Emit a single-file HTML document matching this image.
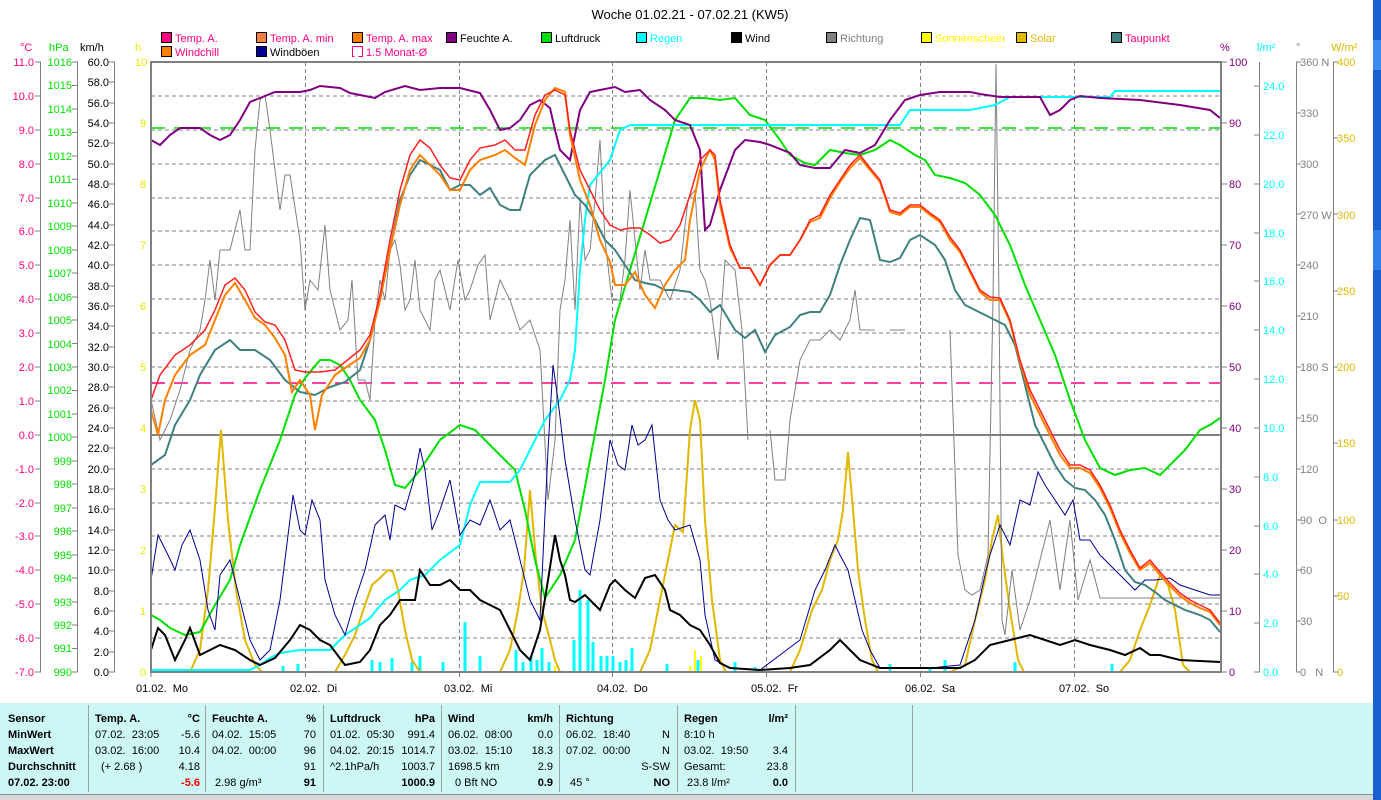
<!DOCTYPE html>
<html><head><meta charset="utf-8"><style>
html,body{margin:0;padding:0;background:#fff;width:1381px;height:800px;overflow:hidden}
svg{display:block;font-family:"Liberation Sans",Arial,sans-serif;font-size:11px}
.b{font-weight:bold}
</style></head><body>
<svg width="1381" height="800" viewBox="0 0 1381 800">
<rect x="0" y="0" width="1381" height="800" fill="#fff"/>
<rect x="1373" y="0" width="8" height="800" fill="#1a5fd0"/>
<rect x="1373" y="40" width="8" height="30" fill="#3a8af0"/>
<rect x="1373" y="230" width="8" height="40" fill="#2f7ee8"/>
<text x="690" y="19" text-anchor="middle" font-size="13">Woche 01.02.21 - 07.02.21 (KW5)</text>
<g>
<rect x="161.5" y="32.5" width="10" height="10" fill="#ff0080" stroke="#000"/><text x="175" y="42" fill="#ff0080">Temp. A.</text>
<rect x="256.5" y="32.5" width="10" height="10" fill="#ff8040" stroke="#000"/><text x="270" y="42" fill="#ff0080">Temp. A. min</text>
<rect x="352.5" y="32.5" width="10" height="10" fill="#ff8000" stroke="#000"/><text x="366" y="42" fill="#ff0080">Temp. A. max</text>
<rect x="446.5" y="32.5" width="10" height="10" fill="#800080" stroke="#000"/><text x="460" y="42" fill="#000">Feuchte A.</text>
<rect x="541.5" y="32.5" width="10" height="10" fill="#00e000" stroke="#000"/><text x="555" y="42" fill="#000">Luftdruck</text>
<rect x="636.5" y="32.5" width="10" height="10" fill="#00ffff" stroke="#000"/><text x="650" y="42" fill="#00ffff">Regen</text>
<rect x="731.5" y="32.5" width="10" height="10" fill="#000" stroke="#000"/><text x="745" y="42" fill="#000">Wind</text>
<rect x="826.5" y="32.5" width="10" height="10" fill="#808080" stroke="#000"/><text x="840" y="42" fill="#808080">Richtung</text>
<rect x="921.5" y="32.5" width="10" height="10" fill="#ffff00" stroke="#000"/><text x="935" y="42" fill="#ffff00">Sonnenschein</text>
<rect x="1016.5" y="32.5" width="10" height="10" fill="#e0b800" stroke="#000"/><text x="1030" y="42" fill="#e0b800">Solar</text>
<rect x="1111.5" y="32.5" width="10" height="10" fill="#408080" stroke="#000"/><text x="1125" y="42" fill="#ff0080">Taupunkt</text>
<rect x="161.5" y="46.5" width="10" height="10" fill="#ff8000" stroke="#000"/><text x="175" y="56" fill="#ff0080">Windchill</text>
<rect x="256.5" y="46.5" width="10" height="10" fill="#000090" stroke="#000"/><text x="270" y="56" fill="#000">Windböen</text>
<path d="M352.5 46.5h10v10h-4M352.5 46.5v10h2" fill="none" stroke="#ff0080"/><text x="366" y="56" fill="#ff0080">1.5 Monat-Ø</text>
</g>
<text x="20" y="51" fill="#ff0080">°C</text>
<text x="49" y="51" fill="#00e000">hPa</text>
<text x="80" y="51" fill="#000">km/h</text>
<text x="135" y="51" fill="#e8e800">h</text>
<text x="1220" y="51" fill="#800080">%</text>
<text x="1257" y="51" fill="#00ffff">l/m²</text>
<text x="1296" y="51" fill="#808080">°</text>
<text x="1331" y="51" fill="#e0b800">W/m²</text>
<g stroke="#808080" stroke-width="1" fill="none">
<path d="M40.5 62V672M77.5 62V672M114.5 62V672M1259.5 62V672M1296.5 62V672M1333.5 62V672"/>
</g>
<g fill="#ff0080" text-anchor="end">
<text x="34" y="66">11.0</text><text x="34" y="100">10.0</text><text x="34" y="134">9.0</text><text x="34" y="168">8.0</text><text x="34" y="202">7.0</text><text x="34" y="235">6.0</text><text x="34" y="269">5.0</text><text x="34" y="303">4.0</text><text x="34" y="337">3.0</text><text x="34" y="371">2.0</text><text x="34" y="405">1.0</text><text x="34" y="439">0.0</text><text x="34" y="473">-1.0</text><text x="34" y="507">-2.0</text><text x="34" y="540">-3.0</text><text x="34" y="574">-4.0</text><text x="34" y="608">-5.0</text><text x="34" y="642">-6.0</text><text x="34" y="676">-7.0</text>
</g>
<g stroke="#808080"><path d="M35 62h6M35 96h6M35 130h6M35 164h6M35 198h6M35 231h6M35 265h6M35 299h6M35 333h6M35 367h6M35 401h6M35 435h6M35 469h6M35 503h6M35 536h6M35 570h6M35 604h6M35 638h6M35 672h6"/></g>
<g fill="#00e000" text-anchor="end">
<text x="72" y="66">1016</text><text x="72" y="89">1015</text><text x="72" y="113">1014</text><text x="72" y="136">1013</text><text x="72" y="160">1012</text><text x="72" y="183">1011</text><text x="72" y="207">1010</text><text x="72" y="230">1009</text><text x="72" y="254">1008</text><text x="72" y="277">1007</text><text x="72" y="301">1006</text><text x="72" y="324">1005</text><text x="72" y="348">1004</text><text x="72" y="371">1003</text><text x="72" y="394">1002</text><text x="72" y="418">1001</text><text x="72" y="441">1000</text><text x="72" y="465">999</text><text x="72" y="488">998</text><text x="72" y="512">997</text><text x="72" y="535">996</text><text x="72" y="559">995</text><text x="72" y="582">994</text><text x="72" y="606">993</text><text x="72" y="629">992</text><text x="72" y="652">991</text><text x="72" y="676">990</text>
</g>
<g stroke="#808080"><path d="M72 62h6M72 85.5h6M72 109h6M72 132.4h6M72 156h6M72 179.3h6M72 203h6M72 226h6M72 250h6M72 273h6M72 297h6M72 320h6M72 343.5h6M72 367h6M72 390.5h6M72 414h6M72 437h6M72 461h6M72 484h6M72 508h6M72 531h6M72 555h6M72 578h6M72 602h6M72 625h6M72 648.5h6M72 672h6"/></g>
<g fill="#000" text-anchor="end">
<text x="109" y="66">60.0</text><text x="109" y="86">58.0</text><text x="109" y="107">56.0</text><text x="109" y="127">54.0</text><text x="109" y="147">52.0</text><text x="109" y="168">50.0</text><text x="109" y="188">48.0</text><text x="109" y="208">46.0</text><text x="109" y="229">44.0</text><text x="109" y="249">42.0</text><text x="109" y="269">40.0</text><text x="109" y="290">38.0</text><text x="109" y="310">36.0</text><text x="109" y="330">34.0</text><text x="109" y="351">32.0</text><text x="109" y="371">30.0</text><text x="109" y="391">28.0</text><text x="109" y="412">26.0</text><text x="109" y="432">24.0</text><text x="109" y="452">22.0</text><text x="109" y="473">20.0</text><text x="109" y="493">18.0</text><text x="109" y="513">16.0</text><text x="109" y="534">14.0</text><text x="109" y="554">12.0</text><text x="109" y="574">10.0</text><text x="109" y="595">8.0</text><text x="109" y="615">6.0</text><text x="109" y="635">4.0</text><text x="109" y="656">2.0</text><text x="109" y="676">0.0</text>
</g>
<g stroke="#808080"><path d="M109 62h6M109 82h6M109 103h6M109 123h6M109 143h6M109 164h6M109 184h6M109 204h6M109 225h6M109 245h6M109 265h6M109 286h6M109 306h6M109 326h6M109 347h6M109 367h6M109 387h6M109 408h6M109 428h6M109 448h6M109 469h6M109 489h6M109 509h6M109 530h6M109 550h6M109 570h6M109 591h6M109 611h6M109 631h6M109 652h6M109 672h6"/></g>
<g fill="#e8e800">
<text x="135" y="66">10</text><text x="140" y="127">9</text><text x="140" y="188">8</text><text x="140" y="249">7</text><text x="140" y="310">6</text><text x="140" y="371">5</text><text x="140" y="432">4</text><text x="140" y="493">3</text><text x="140" y="554">2</text><text x="140" y="615">1</text><text x="140" y="676">0</text>
</g>
<g fill="#800080">
<text x="1229" y="66">100</text><text x="1229" y="127">90</text><text x="1229" y="188">80</text><text x="1229" y="249">70</text><text x="1229" y="310">60</text><text x="1229" y="371">50</text><text x="1229" y="432">40</text><text x="1229" y="493">30</text><text x="1229" y="554">20</text><text x="1229" y="615">10</text><text x="1229" y="676">0</text>
</g>
<g stroke="#808080"><path d="M1221 62h6M1221 123h6M1221 184h6M1221 245h6M1221 306h6M1221 367h6M1221 428h6M1221 489h6M1221 550h6M1221 611h6M1221 672h6"/></g>
<g fill="#00ffff">
<text x="1263" y="90">24.0</text><text x="1263" y="139">22.0</text><text x="1263" y="188">20.0</text><text x="1263" y="237">18.0</text><text x="1263" y="285">16.0</text><text x="1263" y="334">14.0</text><text x="1263" y="383">12.0</text><text x="1263" y="432">10.0</text><text x="1263" y="481">8.0</text><text x="1263" y="530">6.0</text><text x="1263" y="578">4.0</text><text x="1263" y="627">2.0</text><text x="1263" y="676">0.0</text>
</g>
<g stroke="#808080"><path d="M1254 86h6M1254 135h6M1254 184h6M1254 233h6M1254 281h6M1254 330h6M1254 379h6M1254 428h6M1254 477h6M1254 526h6M1254 574h6M1254 623h6M1254 672h6"/></g>
<g fill="#808080">
<text x="1300" y="66">360 N</text><text x="1300" y="117">330</text><text x="1300" y="168">300</text><text x="1300" y="219">270 W</text><text x="1300" y="269">240</text><text x="1300" y="320">210</text><text x="1300" y="371">180 S</text><text x="1300" y="422">150</text><text x="1300" y="473">120</text><text x="1300" y="524">90 &#160;O</text><text x="1300" y="574">60</text><text x="1300" y="625">30</text><text x="1300" y="676">0 &#160;&#160;N</text>
</g>
<g stroke="#808080"><path d="M1296 62h5M1296 113h5M1296 164h5M1296 214h5M1296 265h5M1296 316h5M1296 367h5M1296 418h5M1296 469h5M1296 520h5M1296 570h5M1296 621h5M1296 672h5"/></g>
<g fill="#e0b800">
<text x="1337" y="66">400</text><text x="1337" y="142">350</text><text x="1337" y="219">300</text><text x="1337" y="295">250</text><text x="1337" y="371">200</text><text x="1337" y="447">150</text><text x="1337" y="524">100</text><text x="1337" y="600">50</text><text x="1337" y="676">0</text>
</g>
<g stroke="#808080"><path d="M1333 62h5M1333 138h5M1333 214h5M1333 291h5M1333 367h5M1333 443h5M1333 520h5M1333 596h5M1333 672h5"/></g>
<g stroke="#808080" stroke-dasharray="4,3" stroke-width="1">
<path d="M151 96h1070M151 130h1070M151 164h1070M151 198h1070M151 231h1070M151 265h1070M151 299h1070M151 333h1070M151 367h1070M151 401h1070M151 469h1070M151 503h1070M151 536h1070M151 570h1070M151 604h1070M151 638h1070"/>
<path d="M305.5 62V672M459.5 62V672M612.5 62V672M766.5 62V672M920.5 62V672M1074.5 62V672"/>
</g>
<path d="M151 435h1070" stroke="#808080" stroke-width="2"/>
<path d="M151 383h1070" stroke="#ff0080" stroke-width="1.5" stroke-dasharray="14,9"/>
<path d="M151 128h1070" stroke="#00e000" stroke-width="1.5" stroke-dasharray="14,9"/>
<g stroke="#00ffff" stroke-width="3">
<path d="M283 672v-6M298 672v-8M372 672v-12M380 672v-10M392 672v-14M412 672v-10M420 672v-16M443 672v-10M465 672v-50M480 672v-16M516 672v-22M523 672v-10M531 672v-16M537 672v-12M542 672v-24M549 672v-10M574 672v-32M580 672v-82M588 672v-72M593 672v-30M601 672v-16M607 672v-16M613 672v-16M620 672v-10M626 672v-12M632 672v-24M667 672v-8M698 672v-12M735 672v-10M755 672v-5M890 672v-8M930 672v-5M945 672v-12M1015 672v-10M1112 672v-8"/>
</g>
<g stroke="#ffff00" stroke-width="2"><path d="M555 672v-6M695 672v-22M701 672v-16M690 672v-6"/></g>
<polyline fill="none" stroke="#e0b800" stroke-width="2" points="151,672 190,672 200,650 208,590 214,520 221,430 228,520 236,590 245,640 255,665 262,672 335,672 345,655 355,635 365,605 372,585 380,578 388,570 393,572 398,590 405,630 412,660 420,672 500,672 510,650 518,610 524,570 530,490 536,560 542,610 550,640 555,660 560,672 640,672 650,650 660,600 668,560 675,525 683,532 690,430 695,400 700,420 705,520 712,600 720,660 726,672 790,672 800,650 812,610 822,590 830,560 838,540 843,510 848,452 853,510 858,570 865,620 872,660 878,672 950,672 965,665 975,620 985,580 992,540 998,515 1003,560 1010,610 1018,660 1024,672 1120,672 1130,660 1140,630 1150,605 1160,575 1168,585 1175,610 1183,665 1190,672 1221,672"/>
<polyline fill="none" stroke="#808080" stroke-width="1" points="151,400 160,440 170,420 180,390 190,350 200,330 205,300 210,260 215,300 220,250 230,250 240,210 245,250 250,250 255,150 260,100 265,95 270,130 275,170 280,210 285,175 290,175 300,240 305,310 310,280 318,290 325,225 330,290 340,330 348,320 352,280 358,380 365,380 370,400 375,320 380,280 385,300 390,250 395,240 400,265 405,310 410,300 415,260 420,310 430,330 435,280 440,270 450,310 458,260 465,300 470,290 478,265 485,255 490,320 500,280 510,300 520,330 530,320 540,350 548,500 555,440 560,310 565,280 570,220 575,310 580,200 585,260 590,250 595,200 600,140 605,240 612,300 620,300 625,260 630,190 640,290 645,250 650,280 660,280 670,300 680,270 688,200 695,190 700,270 705,280 710,300 718,360 725,260 735,270 742,330 748,440"/>
<polyline fill="none" stroke="#808080" stroke-width="1" points="770,430 775,480 785,480 790,420 800,360 810,340 820,340 830,330 840,340 850,320 855,290 860,330 875,330"/>
<polyline fill="none" stroke="#808080" stroke-width="1" points="890,330 905,330"/>
<polyline fill="none" stroke="#808080" stroke-width="1" points="950,330 958,555 965,590 972,595 980,590 988,555 993,300 996,64 999,300 1002,620 1005,635 1012,570 1020,630 1030,600 1040,560 1050,520 1060,590 1070,520 1078,600 1090,560 1100,598 1140,598 1221,598"/>
<polyline fill="none" stroke="#00e000" stroke-width="2" points="151,615 160,620 170,628 185,635 200,632 215,605 230,580 240,545 260,490 280,440 295,395 305,378 320,360 330,360 340,365 350,380 360,400 375,420 385,450 395,485 405,488 420,470 440,440 460,425 475,430 490,445 505,460 515,470 525,510 535,560 545,598 560,575 575,540 590,460 605,380 615,320 630,270 645,220 660,170 675,120 690,98 705,98 720,100 735,98 750,115 765,120 780,140 790,155 805,163 815,165 830,150 845,153 860,155 875,150 890,140 900,145 915,155 925,160 935,175 950,178 965,183 980,195 995,215 1010,245 1025,285 1040,320 1055,355 1070,400 1085,440 1100,468 1115,475 1130,470 1145,468 1160,475 1170,465 1185,450 1200,430 1210,425 1220,418"/>
<polyline fill="none" stroke="#00ffff" stroke-width="2" points="151,670 250,670 260,665 270,658 280,653 300,650 330,650 345,635 360,625 370,618 385,600 400,590 410,580 425,575 440,560 460,545 470,505 480,482 510,482 520,470 530,450 545,420 560,400 570,380 575,350 580,270 585,220 590,185 598,175 610,160 620,130 630,125 900,125 910,110 970,110 995,105 1010,97 1110,97 1115,91 1220,91"/>
<polyline fill="none" stroke="#800080" stroke-width="2" points="151,140 160,145 170,135 180,128 200,128 210,135 220,140 230,135 240,120 250,102 260,98 275,92 300,92 310,90 320,86 340,88 350,93 360,95 375,98 385,92 405,86 420,90 440,88 460,88 480,93 490,110 500,130 510,128 520,120 530,105 540,100 550,108 555,130 560,150 570,160 580,110 590,92 600,90 615,87 625,92 640,90 650,100 665,110 675,120 690,125 700,150 705,230 710,225 720,190 735,150 745,140 760,142 770,145 790,153 800,165 815,168 830,168 845,150 860,153 875,145 890,120 905,100 920,95 940,92 970,92 980,94 1000,97 1040,97 1050,115 1060,110 1070,100 1080,96 1100,98 1140,100 1180,105 1210,110 1220,118"/>
<polyline fill="none" stroke="#000090" stroke-width="1" points="151,580 158,535 168,555 175,570 182,545 190,530 200,560 208,610 215,630 220,575 230,560 240,600 250,640 260,660 270,650 280,600 293,495 300,530 305,535 312,500 320,520 325,580 335,615 345,635 355,600 365,570 375,525 385,515 390,540 395,505 405,510 415,475 420,448 425,470 432,530 440,510 450,480 460,535 470,520 480,525 490,500 500,530 510,520 520,560 530,600 540,620 548,450 553,365 558,400 565,460 575,520 585,570 590,575 600,520 610,440 618,465 625,470 632,425 638,445 645,440 652,425 660,500 668,520 675,530 690,525 700,560 705,615 715,660 730,668 760,670 800,640 815,590 825,570 835,545 840,555 848,570 855,600 862,630 870,650 880,668 930,668 960,665 975,620 985,575 990,555 1000,525 1010,545 1020,500 1030,505 1038,472 1045,485 1055,500 1065,515 1073,500 1080,540 1090,540 1100,555 1110,565 1120,575 1135,590 1145,580 1155,580 1170,578 1180,585 1195,590 1210,595 1220,595"/>
<polyline fill="none" stroke="#408080" stroke-width="2" points="151,465 165,455 175,425 190,400 200,375 215,350 230,340 240,350 255,350 270,360 285,380 300,392 315,395 330,387 345,382 360,370 370,340 380,300 390,250 400,200 410,175 420,160 430,165 440,170 450,190 460,185 470,185 480,195 490,188 500,205 510,210 520,210 530,175 545,160 555,155 565,175 575,195 585,205 595,220 605,240 615,250 625,265 635,280 645,283 655,285 665,290 675,290 690,292 700,300 710,312 720,305 735,330 745,338 755,330 765,352 775,335 790,327 800,315 810,312 820,312 830,295 840,265 850,240 860,218 870,220 880,260 890,262 900,258 910,240 920,235 935,245 945,260 955,290 965,305 975,310 985,315 995,320 1005,325 1015,345 1025,385 1035,425 1045,445 1055,465 1065,480 1075,488 1085,490 1095,500 1105,515 1115,540 1125,570 1135,582 1145,585 1155,592 1165,600 1175,605 1185,610 1200,615 1210,620 1220,632"/>
<polyline fill="none" stroke="#ff8000" stroke-width="2" points="151,410 158,435 165,400 175,375 190,355 205,345 215,320 225,295 235,283 245,300 255,318 265,325 275,338 285,355 292,392 300,380 310,395 315,430 322,395 335,375 345,368 360,358 370,340 380,300 390,250 400,205 410,170 420,155 430,165 440,175 450,190 460,190 470,170 480,160 495,155 505,150 515,158 525,165 535,125 545,100 555,88 565,92 570,135 580,180 590,205 600,240 610,262 615,285 625,285 635,272 645,295 655,308 665,285 675,270 685,260 690,220 700,170 710,150 715,160 720,205 730,248 740,268 750,268 760,285 770,265 780,255 790,255 800,240 810,222 820,218 830,198 840,182 850,168 860,158 870,170 880,182 890,212 900,215 910,207 920,207 930,215 940,222 950,240 960,252 970,272 980,292 990,300 1000,300 1010,322 1020,362 1030,395 1040,415 1050,435 1060,455 1070,468 1080,468 1090,473 1100,488 1110,508 1120,533 1130,553 1140,570 1150,563 1160,575 1170,586 1180,596 1190,603 1200,608 1210,612 1220,625"/>
<polyline fill="none" stroke="#ff2020" stroke-width="1.5" points="151,400 160,375 175,355 190,345 205,330 215,310 225,285 235,278 245,290 255,312 265,322 275,325 285,340 295,370 305,372 320,372 335,370 345,362 360,350 370,335 380,295 390,240 400,190 410,155 420,140 430,148 440,165 450,178 460,180 470,160 480,148 495,145 505,140 515,150 525,150 535,115 545,95 555,90 565,95 570,130 580,170 590,190 600,210 610,225 620,230 630,228 640,228 650,235 660,243 670,240 680,225 690,195 700,160 710,150 715,155 720,200 730,245 740,268 750,268 760,285 770,265 780,255 790,255 800,240 810,220 820,215 830,195 840,180 850,165 860,155 870,168 880,180 890,210 900,213 910,205 920,205 930,213 940,220 950,237 960,250 970,270 980,290 990,297 1000,298 1010,320 1020,360 1030,390 1040,410 1050,430 1060,450 1070,465 1080,465 1090,470 1100,485 1110,505 1120,530 1130,550 1140,568 1150,560 1160,572 1170,583 1180,593 1190,600 1200,605 1210,610 1220,623"/>
<polyline fill="none" stroke="#000" stroke-width="2" points="151,650 158,628 165,635 175,660 185,640 190,628 200,655 210,650 220,645 235,650 250,660 260,665 275,658 290,640 300,625 310,630 320,640 330,645 345,665 360,662 370,650 380,625 390,615 400,600 415,600 420,570 430,585 440,585 450,580 460,590 470,590 480,600 490,605 500,610 510,630 520,650 530,660 540,630 548,580 555,535 560,560 565,575 570,600 575,602 585,595 590,600 600,610 610,585 615,580 625,590 635,598 645,578 655,575 665,590 670,610 680,615 690,625 700,630 710,645 720,663 730,668 760,670 790,668 810,665 830,650 840,640 850,650 860,660 880,668 920,668 960,668 975,660 990,645 1010,640 1030,635 1045,640 1060,645 1075,640 1090,645 1110,650 1125,655 1140,648 1150,655 1160,655 1180,660 1220,662"/>
<path d="M151 62H1221V672H151Z" fill="none" stroke="#808080" stroke-width="2"/>
<g stroke="#808080"><path d="M151 672v5M305.5 672v5M459.5 672v5M612.5 672v5M766.5 672v5M920.5 672v5M1074.5 672v5"/></g>
<g fill="#000">
<text x="136" y="692">01.02.&#160; Mo</text><text x="290" y="692">02.02.&#160; Di</text><text x="444" y="692">03.02.&#160; Mi</text><text x="597" y="692">04.02.&#160; Do</text><text x="751" y="692">05.02.&#160; Fr</text><text x="905" y="692">06.02.&#160; Sa</text><text x="1059" y="692">07.02.&#160; So</text>
</g>
<rect x="0" y="703" width="1373" height="91" fill="#ccf7f5"/>
<g stroke="#a0a0a0" stroke-width="1"><path d="M88.5 705V792M205.5 705V792M323.5 705V792M441.5 705V792M559.5 705V792M677.5 705V792M795.5 705V792M912.5 705V792"/></g>
<rect x="0" y="794" width="1373" height="6" fill="#d8d8d8"/>
<path d="M0 794.5H1373" stroke="#909090"/>
<g fill="#000">
<text class="b" x="8" y="722">Sensor</text><text class="b" x="8" y="738">MinWert</text><text class="b" x="8" y="754">MaxWert</text><text class="b" x="8" y="770">Durchschnitt</text><text class="b" x="8" y="786">07.02. 23:00</text>
<text class="b" x="95" y="722">Temp. A.</text><text class="b" x="200" y="722" text-anchor="end">°C</text>
<text x="95" y="738">07.02.&#160; 23:05</text><text x="200" y="738" text-anchor="end">-5.6</text>
<text x="95" y="754">03.02.&#160; 16:00</text><text x="200" y="754" text-anchor="end">10.4</text>
<text x="101" y="770">(+ 2.68 )</text><text x="200" y="770" text-anchor="end">4.18</text>
<text class="b" x="200" y="786" text-anchor="end" fill="#ff0000">-5.6</text>
<text class="b" x="212" y="722">Feuchte A.</text><text class="b" x="316" y="722" text-anchor="end">%</text>
<text x="212" y="738">04.02.&#160; 15:05</text><text x="316" y="738" text-anchor="end">70</text>
<text x="212" y="754">04.02.&#160; 00:00</text><text x="316" y="754" text-anchor="end">96</text>
<text x="316" y="770" text-anchor="end">91</text>
<text x="215" y="786">2.98 g/m³</text><text class="b" x="316" y="786" text-anchor="end">91</text>
<text class="b" x="330" y="722">Luftdruck</text><text class="b" x="435" y="722" text-anchor="end">hPa</text>
<text x="330" y="738">01.02.&#160; 05:30</text><text x="435" y="738" text-anchor="end">991.4</text>
<text x="330" y="754">04.02.&#160; 20:15</text><text x="435" y="754" text-anchor="end">1014.7</text>
<text x="330" y="770">^2.1hPa/h</text><text x="435" y="770" text-anchor="end">1003.7</text>
<text class="b" x="435" y="786" text-anchor="end">1000.9</text>
<text class="b" x="448" y="722">Wind</text><text class="b" x="553" y="722" text-anchor="end">km/h</text>
<text x="448" y="738">06.02.&#160; 08:00</text><text x="553" y="738" text-anchor="end">0.0</text>
<text x="448" y="754">03.02.&#160; 15:10</text><text x="553" y="754" text-anchor="end">18.3</text>
<text x="448" y="770">1698.5 km</text><text x="553" y="770" text-anchor="end">2.9</text>
<text x="455" y="786">0 Bft NO</text><text class="b" x="553" y="786" text-anchor="end">0.9</text>
<text class="b" x="566" y="722">Richtung</text>
<text x="566" y="738">06.02.&#160; 18:40</text><text x="670" y="738" text-anchor="end">N</text>
<text x="566" y="754">07.02.&#160; 00:00</text><text x="670" y="754" text-anchor="end">N</text>
<text x="670" y="770" text-anchor="end">S-SW</text>
<text x="570" y="786">45 °</text><text class="b" x="670" y="786" text-anchor="end">NO</text>
<text class="b" x="684" y="722">Regen</text><text class="b" x="788" y="722" text-anchor="end">l/m²</text>
<text x="684" y="738">8:10 h</text>
<text x="684" y="754">03.02.&#160; 19:50</text><text x="788" y="754" text-anchor="end">3.4</text>
<text x="684" y="770">Gesamt:</text><text x="788" y="770" text-anchor="end">23.8</text>
<text x="687" y="786">23.8 l/m²</text><text class="b" x="788" y="786" text-anchor="end">0.0</text>
</g>
</svg>
</body></html>
